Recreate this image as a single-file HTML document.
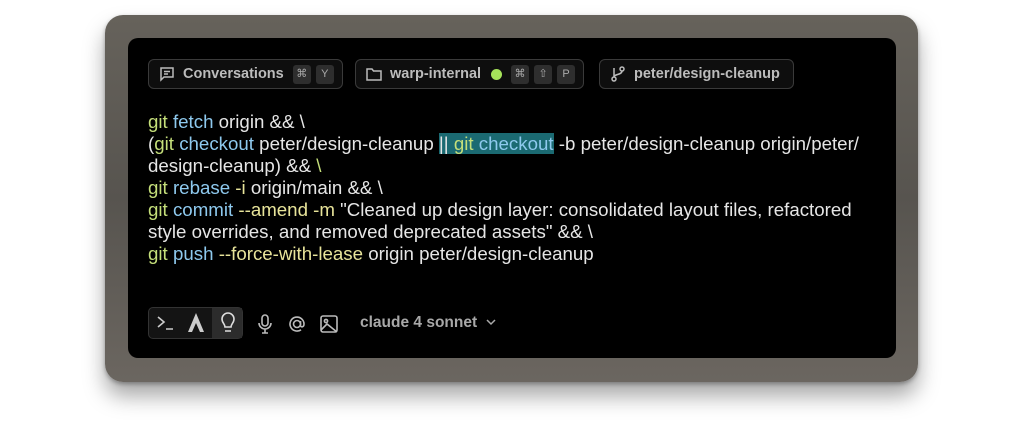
<!DOCTYPE html>
<html><head><style>
body{margin:0;width:1024px;height:424px;background:#fff;position:relative;overflow:hidden;font-family:"Liberation Sans",sans-serif}
.frame{position:absolute;left:105px;top:15px;width:813px;height:367px;border-radius:18px;background:linear-gradient(180deg,#66625b,#57544f 50%,#6b6660);box-shadow:0 14px 22px rgba(0,0,0,.35),0 2px 4px rgba(0,0,0,.3)}
.screen{position:absolute;left:128px;top:38px;width:768px;height:320px;border-radius:10px;background:#000}
.chip{position:absolute;top:59px;height:30px;border:1px solid #3a3a3a;border-radius:6px;background:#0e0e0e;color:#bcbcbc;font-size:14.5px;font-weight:bold;display:flex;align-items:center;box-sizing:border-box;padding-left:9px;white-space:nowrap}
.chip svg{margin-right:7px;flex:none}
.k{display:inline-block;width:18px;height:19px;background:#2e2e2e;border-radius:3px;color:#aaa;font-size:11px;font-weight:normal;text-align:center;line-height:19px;margin-left:5px;flex:none}
.code{position:absolute;left:148px;top:111px;color:#e6e6e6;font-size:18.7px;line-height:22px;white-space:pre;letter-spacing:0}
.g{color:#c5df7a}.c{color:#8ec9ee}.f{color:#e8e49a}
.hl{background:#1b6a72}
.seg{position:absolute;left:148px;top:307px;width:95px;height:32px;border:1px solid #333;border-radius:5px;background:#141414;box-sizing:border-box}
.seg .on{position:absolute;left:63px;top:0;width:30px;height:30px;background:#2c2c2c}
.ic{position:absolute}
.model{position:absolute;left:360px;top:314px;color:#a8a8a8;font-size:15.5px;font-weight:bold}
</style></head><body>
<div class="frame"></div>
<div class="screen"></div>
<div class="chip" style="left:148px;width:195px">
<svg width="18" height="18" viewBox="0 0 18 18" fill="none" stroke="#bbb" stroke-width="1.5"><path d="M3 3h12v9H6l-3 3z"/><path d="M6 6.5h6M6 9h4"/></svg>Conversations<span class="k" style="margin-left:9px">⌘</span><span class="k">Y</span></div>
<div class="chip" style="left:355px;width:229px">
<svg width="18" height="18" viewBox="0 0 18 18" fill="none" stroke="#bbb" stroke-width="1.5"><path d="M2 4h5l1.5 2H16v9H2z"/></svg>warp-internal<span style="display:inline-block;width:11px;height:11px;border-radius:50%;background:#a6e35a;margin-left:10px;margin-right:4px;flex:none"></span><span class="k">⌘</span><span class="k">⇧</span><span class="k">P</span></div>
<div class="chip" style="left:599px;width:195px">
<svg width="18" height="18" viewBox="0 0 18 18" fill="none" stroke="#bbb" stroke-width="1.5"><circle cx="5" cy="14" r="2"/><circle cx="13" cy="4" r="2"/><path d="M5 3v9M13 6c0 4-8 3-8 6"/></svg>peter/design-cleanup</div>
<div class="code"><span class="g">git</span> <span class="c">fetch</span> origin &amp;&amp; \
(<span class="g">git</span> <span class="c">checkout</span> peter/design-cleanup <span class="hl">|| <span class="g">git</span> <span class="c">checkout</span></span> -b peter/design-cleanup origin/peter/
design-cleanup) &amp;&amp; <span class="g">\</span>
<span class="g">git</span> <span class="c">rebase</span> <span class="f">-i</span> origin/main &amp;&amp; \
<span class="g">git</span> <span class="c">commit</span> <span class="f">--amend -m</span> "Cleaned up design layer: consolidated layout files, refactored
style overrides, and removed deprecated assets" &amp;&amp; \
<span class="g">git</span> <span class="c">push</span> <span class="f">--force-with-lease</span> origin peter/design-cleanup</div>
<div class="seg"><div class="on"></div></div>
<svg class="ic" style="left:155px;top:313px" width="22" height="20" viewBox="0 0 22 20" fill="none" stroke="#ccc" stroke-width="1.6"><path d="M3 4l6 5-6 5M11 16h7"/></svg>
<svg class="ic" style="left:186px;top:312px" width="20" height="22" viewBox="0 0 20 22"><path d="M10 1L2 20h4l4-9 4 9h4z" fill="#ccc"/></svg>
<svg class="ic" style="left:218px;top:312px" width="20" height="22" viewBox="0 0 20 22" fill="none" stroke="#ddd" stroke-width="1.6"><path d="M7 15c0-3-3-4-3-8a6 6 0 0 1 12 0c0 4-3 5-3 8zM7 19h6"/></svg>
<svg class="ic" style="left:255px;top:313px" width="20" height="22" viewBox="0 0 20 22" fill="none" stroke="#bbb" stroke-width="1.6"><rect x="7" y="2" width="6" height="11" rx="3"/><path d="M4 10a6 6 0 0 0 12 0M10 16v4M7 20h6"/></svg>
<svg class="ic" style="left:286px;top:313px" width="22" height="22" viewBox="0 0 22 22" fill="none" stroke="#bbb" stroke-width="1.6"><circle cx="11" cy="11" r="3.5"/><path d="M14.5 8v4.5c0 2 3.5 2 3.5-1.5a7 7 0 1 0-3 5.8"/></svg>
<svg class="ic" style="left:318px;top:313px" width="22" height="22" viewBox="0 0 22 22" fill="none" stroke="#bbb" stroke-width="1.6"><rect x="3" y="3" width="16" height="16" rx="2"/><circle cx="8" cy="8" r="1.6"/><path d="M3 17l6-6 10 8"/></svg>
<div class="model">claude 4 sonnet <svg width="12" height="10" viewBox="0 0 12 10" fill="none" stroke="#aaa" stroke-width="1.5" style="margin-left:4px"><path d="M2 3l4 4 4-4"/></svg></div>
</body></html>
